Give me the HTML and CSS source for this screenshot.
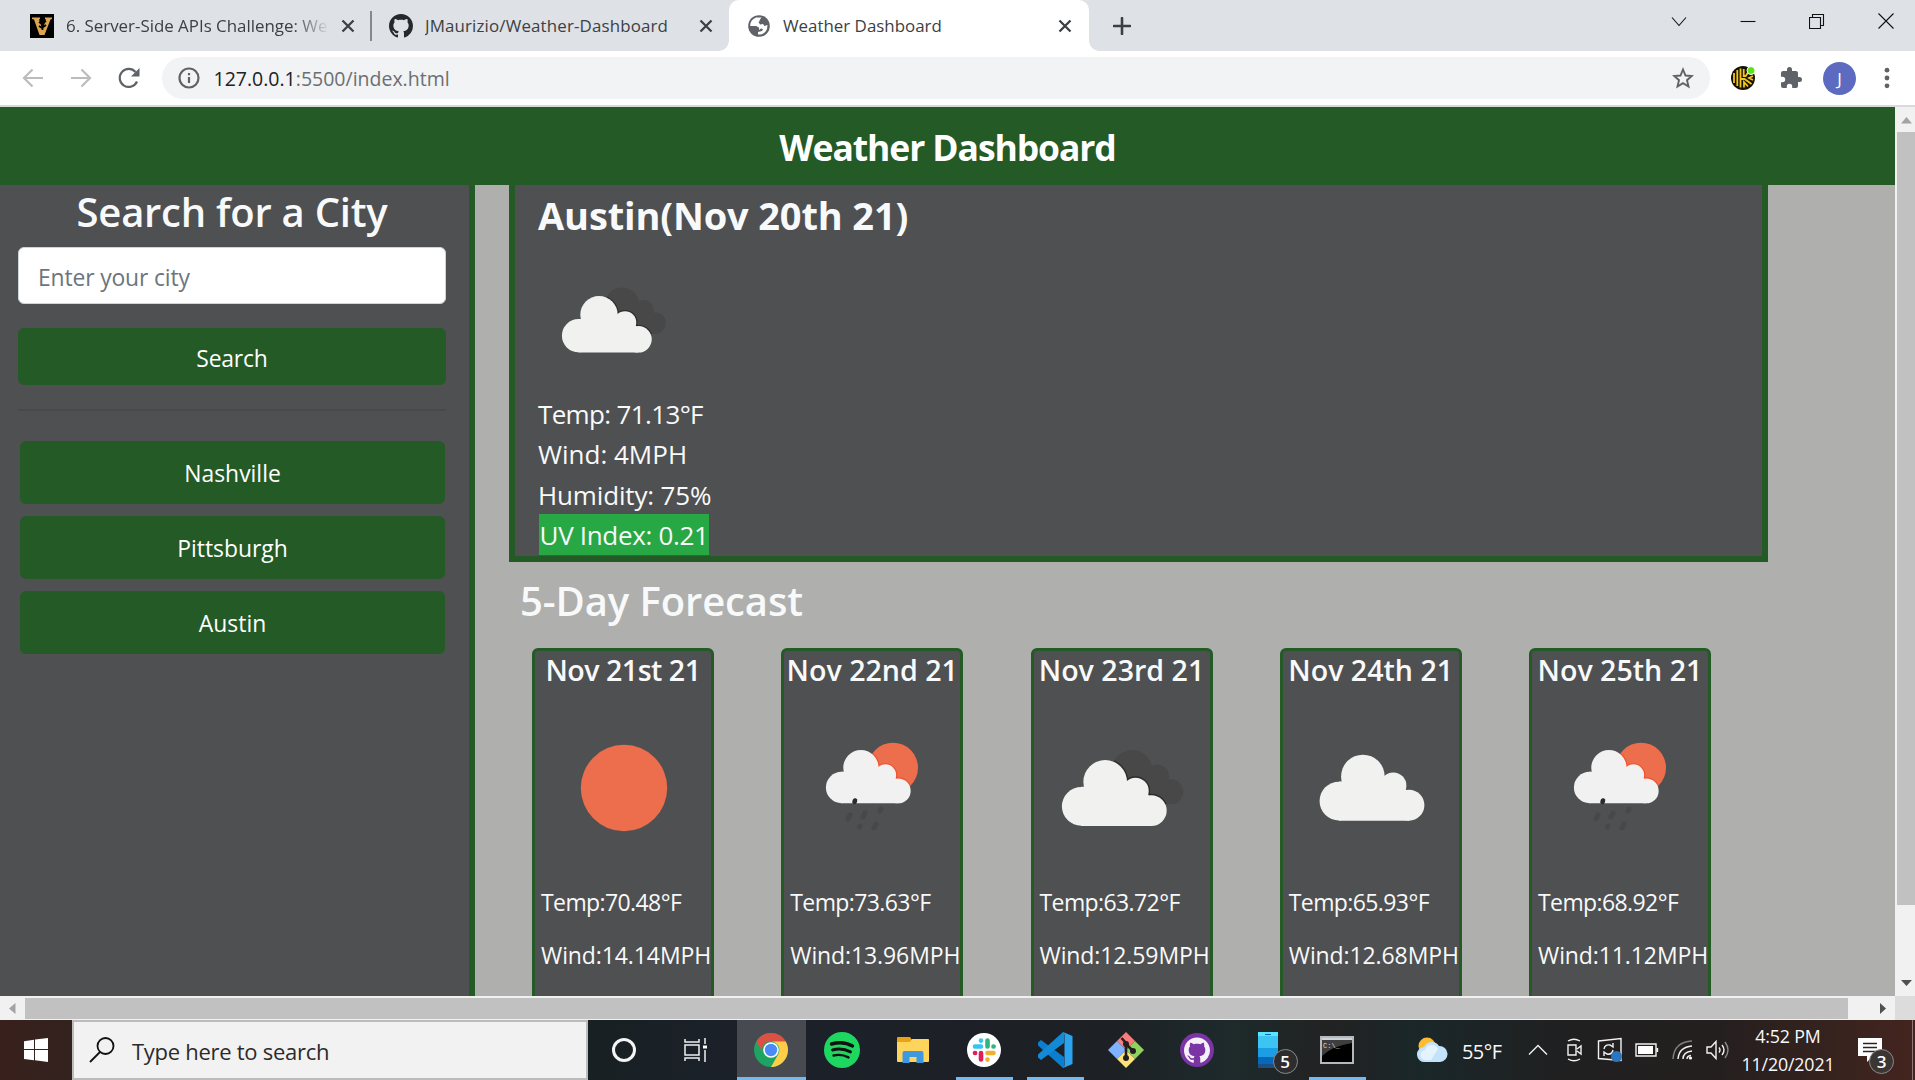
FILE: index.html
```html
<!DOCTYPE html>
<html lang="en">
<head>
<meta charset="utf-8">
<title>Weather Dashboard</title>
<link rel="stylesheet" href="styles.css">
</head>
<body>
<svg class="defs" width="0" height="0" aria-hidden="true">
  <defs>
    <g id="cloud">
      <circle cx="16.5" cy="39.7" r="16.6"/><circle cx="37" cy="18.7" r="18.7"/><circle cx="63" cy="26.5" r="11.3"/><circle cx="76.5" cy="43.3" r="13.2"/>
      <path d="M16.5 23H37V12L63 22L76.500 32V56.500H16.500Z"/>
    </g>
    <clipPath id="dark-clip"><circle cx="60" cy="9" r="17.500"/><circle cx="81.700" cy="14" r="10"/><circle cx="93.300" cy="27.300" r="10.700"/><path d="M44 9H78L94 20V38H60Z"/></clipPath>
    <g id="broken">
      <g clip-path="url(#dark-clip)">
        <path fill="#484849" d="M40-10H106V40H40Z"/>
        <use href="#cloud" fill="#2c2c2d" stroke="#2c2c2d" stroke-width="2.400"/>
      </g>
      <use href="#cloud" fill="#f1f1ef"/>
    </g>
    <clipPath id="sun-clip"><circle cx="109" cy="79.700" r="25"/></clipPath>
    <g id="rain">
      <circle cx="109" cy="79.700" r="25" fill="#ec6e4c"/>
      <g clip-path="url(#sun-clip)"><use href="#cloud" transform="translate(42 62) scale(.944)" fill="#f0502c" stroke="#f0502c" stroke-width="2.400"/></g>
      <use href="#cloud" transform="translate(42 62) scale(.944)" fill="#f1f1f1"/>
      <path d="M70.500 114l.5-1.500" stroke="#2c2c2d" stroke-width="4.600" stroke-linecap="round"/>
      <path d="M64 131l2-4M79 129l2-4M96 123l1-2M75.500 139l.5-1M90 140l2-4" stroke="#48484a" stroke-width="5" stroke-linecap="round"/>
    </g>
    <path id="octocat" d="M8 0C3.580 0 0 3.580 0 8c0 3.540 2.290 6.530 5.470 7.590.4.070.55-.17.55-.38 0-.19-.01-.82-.01-1.490-2.010.37-2.530-.49-2.690-.94-.09-.23-.48-.94-.82-1.130-.28-.15-.68-.52-.01-.53.63-.01 1.080.58 1.230.82.72 1.210 1.870.87 2.330.66.070-.52.28-.87.51-1.070-1.780-.2-3.640-.89-3.640-3.950 0-.87.31-1.590.82-2.150-.08-.2-.36-1.020.08-2.120 0 0 .67-.21 2.200.82.64-.18 1.320-.27 2-.27s1.360.09 2 .27c1.530-1.040 2.200-.82 2.200-.82.44 1.100.16 1.920.08 2.120.51.56.82 1.270.82 2.150 0 3.070-1.870 3.750-3.650 3.950.29.25.54.73.54 1.480 0 1.070-.01 1.930-.01 2.200 0 .21.15.46.55.38A8.010 8.010 0 0 0 16 8c0-4.420-3.580-8-8-8z"/>
  </defs>
</svg>

<div class="tabs">
  <div class="tab tab-first">
    <svg class="favicon" width="24" height="24" viewBox="0 0 24 24"><path d="M0 0h24v24H0z"/><path d="M2 3.500H10V5L9 5.500l3.500 10L16 5.500 15 5V3.500h7V5l-1.500.5-6 15.500h-5L4 5.500 2 5z" fill="#dba552"/><path d="M12.500 3v13M9 8l3 2 4-3M9 12l3 2 4-3" stroke="#000" stroke-width="1.800" fill="none"/></svg>
    <span class="tab-title faded">6. Server-Side APIs Challenge: We</span>
    <svg class="close" width="14" height="14" viewBox="0 0 14 14"><path d="M1.500 1.500l11 11M12.500 1.500l-11 11"/></svg>
  </div>
  <div class="tab tab-second">
    <svg class="favicon" width="24" height="24" viewBox="0 0 16 16"><use href="#octocat" fill="#24292f"/></svg>
    <span class="tab-title">JMaurizio/Weather-Dashboard</span>
    <svg class="close" width="14" height="14" viewBox="0 0 14 14"><path d="M1.500 1.500l11 11M12.500 1.500l-11 11"/></svg>
  </div>
  <div class="tab tab-active">
    <svg class="favicon" width="22" height="22" viewBox="0 0 22 22"><circle cx="11" cy="11" r="10.800" fill="#5f6368"/><path d="M8 2.500C4 4 2 7.500 2.200 11H8l3 1.500V15l2-1.500 2 .5-1 2-4 1v2.500c4 .3 7.500-1.500 9-5.500l.5-4-3 1-1.500-2-3 .5-1.500-2.500H8V7.500l3-.5 1-2.500 1.500-2z" fill="#fff"/></svg>
    <span class="tab-title">Weather Dashboard</span>
    <svg class="close" width="14" height="14" viewBox="0 0 14 14"><path d="M1.500 1.500l11 11M12.500 1.500l-11 11"/></svg>
  </div>
  <svg class="newtab" width="18" height="18" viewBox="0 0 18 18"><path d="M9 1v16M1 9h16" stroke="#3c4043" stroke-width="2.600" stroke-linecap="round"/></svg>
  <div class="winbtns">
    <svg width="16" height="16" viewBox="0 0 16 16"><path d="M1 4.500l7 8 7-8"/></svg>
    <svg width="16" height="16" viewBox="0 0 16 16"><path d="M.5 8.500h15"/></svg>
    <svg width="16" height="16" viewBox="0 0 16 16"><path d="M.5 4.500h11v11H.5zM3.500 4.500v-3h11v11h-3"/></svg>
    <svg width="16" height="16" viewBox="0 0 16 16"><path d="M.5.5l15 15M15.500.5l-15 15"/></svg>
  </div>
</div>

<div class="toolbar">
  <svg width="22" height="20" viewBox="0 0 22 20" class="nav nav-off"><path d="M21 10H2M10.500 1.500L2 10l8.500 8.500"/></svg>
  <svg width="22" height="20" viewBox="0 0 22 20" class="nav nav-off"><path d="M1 10h19M11.500 1.500L20 10l-8.500 8.500"/></svg>
  <svg width="22" height="22" viewBox="0 0 22 22" class="nav reload"><path d="M19 14.500A9 9 0 1 1 17.500 5"/><path d="M21.500 1v8.500H13z" fill="#5f6368" stroke="none"/></svg>
  <div class="omnibox">
    <svg width="22" height="22" viewBox="0 0 22 22" fill="none" stroke="#5f6368" stroke-width="2.200"><circle cx="11" cy="11" r="9.500"/><path d="M11 10v6M11 6v2.200"/></svg>
    <span class="url">127.0.0.1<span class="path">:5500/index.html</span></span>
    <svg class="star" width="22" height="22" viewBox="0 0 22 22"><path d="M11 2.500l2.500 6 6.300.5-4.800 4.200 1.500 6.300-5.500-3.400-5.500 3.400L7 13.200 2.200 9l6.300-.5z" fill="none" stroke="#5f6368" stroke-width="1.900"/></svg>
  </div>
  <svg class="ext" width="24" height="24" viewBox="0 0 24 24"><circle cx="12" cy="12" r="12" fill="#151208"/><path d="M3 7v10M6.300 4v16M9.500 2.500v19M12.700 3v7h2l2-3M9.500 13h4l7 5M13 21.500V16l4 4.500M22 14l-4-2 4-2" stroke="#f5c518" stroke-width="1.800" fill="none"/><circle cx="20" cy="4.500" r="4" fill="#5fe01c" stroke="#fff"/></svg>
  <svg class="puzzle" width="24" height="24" viewBox="0 0 24 24"><path fill="#5f6368" d="M20.500 11H19V7c0-1.100-.9-2-2-2h-4V3.500a2.500 2.500 0 0 0-5 0V5H4c-1.100 0-2 .9-2 2v3.800h1.500a2.700 2.700 0 0 1 0 5.400H2V20c0 1.100.9 2 2 2h3.800v-1.500a2.700 2.700 0 0 1 5.400 0V22H17c1.100 0 2-.9 2-2v-4h1.500a2.500 2.500 0 0 0 0-5z"/></svg>
  <div class="avatar">J</div>
  <svg width="6" height="22" viewBox="0 0 6 22" fill="#5f6368"><circle cx="3" cy="3.200" r="2.400"/><circle cx="3" cy="11" r="2.400"/><circle cx="3" cy="18.800" r="2.400"/></svg>
</div>

<div class="viewport">
  <div class="page">
    <header class="page-header"><h1>Weather Dashboard</h1></header>
    <div class="columns">
      <aside class="sidebar">
        <h2>Search for a City</h2>
        <div class="field">Enter your city</div>
        <button class="btn search">Search</button>
        <hr>
        <div class="history">
          <button class="btn">Nashville</button>
          <button class="btn">Pittsburgh</button>
          <button class="btn">Austin</button>
        </div>
      </aside>
      <main class="main">
        <section class="current">
          <h2>Austin(Nov 20th 21)</h2>
          <svg width="150" height="155" viewBox="0 0 150 155"><use href="#broken" transform="translate(24 57)"/></svg>
          <p class="temp">Temp: 71.13°F</p>
          <p>Wind: 4MPH</p>
          <p class="humidity">Humidity: 75%</p>
          <p><span class="uv">UV Index: 0.21</span></p>
        </section>
        <h2 class="forecast-title">5-Day Forecast</h2>
        <section class="forecast">
          <article class="day"><h3 class="st">Nov 21st 21</h3>
            <svg width="176" height="196" viewBox="0 0 176 196"><circle cx="89" cy="100" r="43.200" fill="#ec6e4c"/></svg>
            <p class="temp">Temp:70.48°F</p><p>Wind:14.14MPH</p></article>
          <article class="day"><h3>Nov 22nd 21</h3>
            <svg width="176" height="196" viewBox="0 0 176 196"><use href="#rain"/></svg>
            <p class="temp">Temp:73.63°F</p><p>Wind:13.96MPH</p></article>
          <article class="day"><h3>Nov 23rd 21</h3>
            <svg width="176" height="196" viewBox="0 0 176 196"><use href="#broken" transform="translate(28 72) scale(1.167)"/></svg>
            <p class="temp">Temp:63.72°F</p><p>Wind:12.59MPH</p></article>
          <article class="day"><h3>Nov 24th 21</h3>
            <svg width="176" height="196" viewBox="0 0 176 196"><use href="#cloud" transform="translate(36.700 66.700) scale(1.167)" fill="#f1f1ef"/></svg>
            <p class="temp">Temp:65.93°F</p><p>Wind:12.68MPH</p></article>
          <article class="day"><h3>Nov 25th 21</h3>
            <svg width="176" height="196" viewBox="0 0 176 196"><use href="#rain"/></svg>
            <p class="temp">Temp:68.92°F</p><p>Wind:11.12MPH</p></article>
        </section>
      </main>
    </div>
  </div>
  <div class="vscroll">
    <svg width="11" height="7" viewBox="0 0 11 7"><path d="M0 6.500L5.500 0 11 6.500z" fill="#a3a3a3"/></svg>
    <div class="vthumb"></div>
    <svg class="down" width="11" height="6" viewBox="0 0 11 6"><path d="M0 0h11L5.500 6z" fill="#505050"/></svg>
  </div>
</div>
<div class="hscroll">
  <svg width="7" height="11" viewBox="0 0 7 11"><path d="M6.500 0v11L0 5.500z" fill="#a3a3a3"/></svg>
  <div class="hthumb"></div>
  <svg class="right" width="6" height="11" viewBox="0 0 6 11"><path d="M0 0v11l6-5.500z" fill="#505050"/></svg>
  <div class="corner"></div>
</div>

<div class="taskbar">
  <div class="start"><svg width="24" height="24" viewBox="0 0 24 24" fill="#fff"><path d="M0 3.200L10 1.800V11H0zM11 1.600L24 0v11H11zM0 12h10v10.200L0 21zM11 12h13v12l-13-1.700z"/></svg></div>
  <div class="search-box">
    <svg width="26" height="26" viewBox="0 0 26 26" fill="none" stroke="#111" stroke-width="1.800"><circle cx="16.500" cy="9" r="8"/><path d="M11 15L1 25"/></svg>
    <span>Type here to search</span>
  </div>
  <div class="cell cortana"><svg width="26" height="26" viewBox="0 0 26 26"><circle cx="13" cy="13" r="10.500" fill="none" stroke="#f4f4f4" stroke-width="3"/></svg></div>
  <div class="cell taskview"><svg width="24" height="24" viewBox="0 0 24 24" fill="none" stroke="#f0f0f0" stroke-width="1.500"><path d="M1 1v3h14V1M1 7h14v10H1zM1 23v-3h14v3M21 0v6M21 12v12"/><path d="M19 7.500h4v3h-4z" fill="#fff" stroke="none"/></svg></div>
  <div class="cell app active"><svg width="34" height="34" viewBox="0 0 34 34"><circle cx="17" cy="17" r="17" fill="#1da462"/><path d="M2.300 8.500A17 17 0 0 1 31.700 8.500H17a8 8 0 0 0-7.500 12.500z" fill="#dd5144"/><path d="M31.700 8.500A17 17 0 0 1 17 34L24.400 21A8.500 8.500 0 0 0 17 8.500z" fill="#ffcd46"/><circle cx="17" cy="17" r="7.800" fill="#fff"/><circle cx="17" cy="17" r="6.200" fill="#4c8bf5"/></svg></div>
  <div class="cell app"><svg width="36" height="36" viewBox="0 0 36 36"><circle cx="18" cy="18" r="18" fill="#1ed760"/><path d="M7.500 12c7-2 15-1.500 21 2" stroke="#111" stroke-width="3.400" fill="none" stroke-linecap="round"/><path d="M8.500 18c6-1.600 12.500-1 18 1.900" stroke="#111" stroke-width="2.900" fill="none" stroke-linecap="round"/><path d="M9.500 23.500c5-1.200 10-.8 15 1.900" stroke="#111" stroke-width="2.400" fill="none" stroke-linecap="round"/></svg></div>
  <div class="cell app"><svg width="32" height="28" viewBox="0 0 32 28"><path d="M0 2q0-1 1-1h12l2 3v6H0z" fill="#e8a317"/><path d="M0 6h13l2-3h16q1 0 1 1v21q0 1-1 1H1q-1 0-1-1z" fill="#ffd45c"/><path d="M5.500 27V17q0-2 2-2h17q2 0 2 2v10h-7v-6h-7v6z" fill="#3e98e0"/></svg></div>
  <div class="cell app running"><svg width="34" height="34" viewBox="0 0 34 34"><circle cx="17" cy="17" r="17" fill="#fff"/><g stroke-width="4.600" stroke-linecap="round"><path d="M8 13.500h6M14 7.500v.1" stroke="#36c5f0"/><path d="M20.500 7.500v6M26.500 13.500h.1" stroke="#2eb67d"/><path d="M26.500 20h-6M20.500 26.500v.1" stroke="#ecb22e"/><path d="M14 26.500V20M8 20h.1" stroke="#e01e5a"/></g></svg></div>
  <div class="cell app running"><svg width="36" height="36" viewBox="0 0 36 36"><path d="M1 10.500L4 8l23 17v10.500L26 36 1 13.500z" fill="#0a7fcf"/><path d="M1 25.500L4 28l23-17V.5L26 0 1 22.500z" fill="#1489d6"/><path d="M26 0l9.500 4v28L26 36q1.500-1 1.500-3V3q0-2-1.500-3z" fill="#2ba3ef"/></svg></div>
  <div class="cell app"><svg width="36" height="36" viewBox="0 0 36 36"><path d="M18 0l9 9-9 9-9-9z" fill="#f97c7c"/><path d="M27 9l9 9-9 9-9-9z" fill="#8fd35f"/><path d="M9 9l9 9-9 9-9-9z" fill="#80b3ff"/><path d="M18 18l9 9-9 9-9-9z" fill="#ffe27a"/><path d="M13.500 6l4.500 5v15M18 12l7 7" stroke="#231f20" stroke-width="2.600" fill="none"/><circle cx="18" cy="12" r="3" fill="#231f20"/><circle cx="18" cy="26" r="3" fill="#231f20"/><circle cx="25" cy="19" r="3" fill="#231f20"/></svg></div>
  <div class="cell app"><svg width="34" height="34" viewBox="0 0 34 34"><circle cx="17" cy="17" r="17" fill="#7b34a5"/><use href="#octocat" transform="translate(4 4.500) scale(1.625)" fill="#f5f0f8"/></svg></div>
  <div class="cell app phone"><svg width="20" height="36" viewBox="0 0 20 36"><path d="M0 0h20v36H0z" fill="#3cc5f2"/><path d="M0 0h20v4H0z" fill="#5ae5ff"/><path d="M0 16h20v20H0z" fill="#1d9de3"/><path d="M0 25h20v11H0z" fill="#0868b8"/><path d="M0 32h20v4H0z" fill="#1b4f87"/><path d="M7 2.500h6" stroke="#0868b8"/></svg><span class="badge">5</span></div>
  <div class="cell app running cmd"><svg width="34" height="28" viewBox="0 0 34 28"><path d="M1 1h32v26H1z" fill="#000" stroke="#b5b8bc" stroke-width="2"/><path d="M2 4V2h30v2z" fill="#ccd3da"/><path d="M2 4h30v3Q12 10 2 20z" fill="#3e3e3e"/><text x="3" y="12" font-size="7" fill="#ddd" class="mono">C:\_</text></svg></div>
  <div class="tray">
    <div class="weather"><svg width="31" height="26" viewBox="0 0 31 26"><circle cx="10" cy="9" r="8.500" fill="#fdbb2d"/><path d="M8 25a7.500 7.500 0 0 1-1-15 8.500 8.500 0 0 1 15-1 8 8 0 0 1 1 16z" fill="#c3e3fa"/><path d="M9 23a5 5 0 0 1-1-10 7 7 0 0 1 13-1L14 23z" fill="#e4f3fd"/></svg><span>55°F</span></div>
    <div class="ti w42"><svg width="20" height="12" viewBox="0 0 20 12"><path d="M1 10.500L10 1.500l9 9"/></svg></div>
    <div class="ti w32"><svg width="18" height="24" viewBox="0 0 18 24"><path d="M2 3q6-3.500 12 0M2 21q6 3.500 12 0M2 7h8v10H2zM11 11l4-3v8l-4-3"/></svg></div>
    <div class="ti w38"><svg width="26" height="26" viewBox="0 0 26 26"><path d="M1.500 4L24 1.500v22L1.500 21.500z"/><path d="M7 12q1-5 6-4l3 2V6M16 13q-1 5-6 4l-3-2v4"/><circle cx="19.500" cy="19.500" r="5.500" fill="#2b76c0" stroke="none"/></svg></div>
    <div class="ti w36"><svg width="24" height="14" viewBox="0 0 24 14"><path d="M1 1h20v12H1zM22.500 5v4"/><path d="M3 3h15v8H3z" fill="#fff" stroke="none"/></svg></div>
    <div class="ti w36"><svg width="22" height="22" viewBox="0 0 22 22"><path d="M1 20Q2 3 20 2" opacity=".45"/><path d="M6 20Q7 8 20 7M11 20Q11 13 20 12M15 20q0-3 4-3.500"/><circle cx="18.500" cy="19" r="1.600" fill="#fff" stroke="none"/></svg></div>
    <div class="ti w34"><svg width="24" height="20" viewBox="0 0 24 20"><path d="M1 7h4l5-5.500v17L5 13H1zM13 7.500q2 2.500 0 5M16 5q4 5 0 10"/><path d="M19 2q6 8 0 16" opacity=".5"/></svg></div>
    <div class="clock"><span>4:52 PM</span><span>11/20/2021</span></div>
    <div class="action"><svg width="24" height="24" viewBox="0 0 24 24"><path d="M0 0h24v18H15l-6 6v-6H0z" fill="#fff"/><path d="M5 5.500h14M5 9.500h14M5 13.500h14" stroke="#2b2422" stroke-width="1.300"/></svg><span class="badge">3</span></div>
    <div class="peek"></div>
  </div>
</div>
</body>
</html>
```
FILE: styles.css
```css
* { box-sizing: border-box; }
body { margin: 0; width: 1915px; height: 1080px; overflow: hidden; display: flex; flex-direction: column; font-family: "Open Sans", "Noto Sans", sans-serif; color: #f8f9fa; }
h1, h2, h3, p { margin: 0; white-space: nowrap; }
svg { display: block; flex: none; }
.defs { position: absolute; }

/* browser tabs */
.tabs { flex: none; height: 51px; background: #dee1e6; display: flex; align-items: flex-start; color: #3c4043; }
.tab { height: 51px; display: flex; align-items: center; }
.tab-first { width: 372px; padding: 0 17px 0 30px; background: linear-gradient(#85888d, #85888d) right 11px / 2px 30px no-repeat; }
.tab-second { width: 357px; padding: 0 16px 0 17px; }
.tab-second .tab-title { letter-spacing: 0.15px; }
.tab-active { width: 360px; padding: 0 17px 0 19px; background: #fff; border-radius: 10px 10px 0 0; position: relative; }
.tab-active::before, .tab-active::after { content: ""; position: absolute; bottom: 0; width: 10px; height: 10px; }
.tab-active::before { left: -10px; background: radial-gradient(circle at 0 0, transparent 9.5px, #fff 10px); }
.tab-active::after { right: -10px; background: radial-gradient(circle at 100% 0, transparent 9.5px, #fff 10px); }
.tab-title { flex: 1; margin-left: 12px; font-size: 16.9px; line-height: 24px; white-space: nowrap; overflow: hidden; }
.tab-active .tab-title { margin-left: 13px; }
.faded { margin-right: 11px; -webkit-mask-image: linear-gradient(90deg, #000 86%, transparent 100%); mask-image: linear-gradient(90deg, #000 86%, transparent 100%); }
.close { stroke: #3c4043; stroke-width: 2.3; fill: none; }
.newtab { margin: 16.5px 0 0 24px; }
.winbtns { margin-left: auto; display: flex; gap: 53px; padding: 13px 21px 0 0; }
.winbtns svg { fill: none; stroke: #111; stroke-width: 1.1; }

/* address bar */
.toolbar { flex: none; height: 56px; background: #fff; border-bottom: 2px solid #d9dadc; display: flex; align-items: center; padding: 0 25px 0 22px; }
.nav { fill: none; stroke: #5f6368; stroke-width: 2.2; margin-right: 26px; }
.nav-off { stroke: #babcbe; }
.reload { margin-right: 22px; }
.omnibox { width: 1548px; height: 42px; border-radius: 21px; background: #f1f3f4; display: flex; align-items: center; padding: 0 16px 0 16px; }
.url { margin-left: 13.5px; font-size: 19.5px; color: #202124; white-space: nowrap; }
.path { color: #6b6f73; }
.star { margin-left: auto; }
.ext { margin-left: 21px; }
.puzzle { margin: 0 20px 0 24px; }
.avatar { width: 33px; height: 33px; border-radius: 50%; background: #5c6bc0; color: #fff; font-size: 17px; line-height: 33px; text-align: center; margin-right: 28px; }

/* viewport */
.viewport { flex: none; height: 889px; display: flex; overflow: hidden; }
.page { width: 1895px; height: 889px; overflow: hidden; display: flex; flex-direction: column; background: #afafad; }
.page-header { flex: none; height: 78px; background: #245a25; text-align: center; padding-top: 12px; }
.page-header h1 { font-size: 35.5px; line-height: 56px; letter-spacing: -1.1px; color: #fff; }
.columns { flex: 1; display: flex; }
.sidebar { width: 475px; background: #4f5051; border-right: 6px solid #245a25; padding: 1px 23px 0 18px; }
.sidebar h2 { font-size: 40px; line-height: 52px; font-weight: 600; text-align: center; letter-spacing: -0.25px; }
.field { margin-top: 9px; height: 57px; border: 1px solid #ced4da; border-radius: 6px; background: #fff; color: #6c757d; font-size: 22.9px; line-height: 60px; padding-left: 19px; letter-spacing: -0.15px; }
.btn { display: block; width: 100%; height: 63px; border: 0; border-radius: 6px; background: #245a25; color: #fff; font: 22.9px/62px "Open Sans", "Noto Sans", sans-serif; text-align: center; padding: 2px 0 0; }
.search { margin-top: 24px; height: 57px; line-height: 55px; padding-top: 3px; letter-spacing: -0.2px; }
.sidebar hr { margin: 24px 0 30px; height: 2px; border: 0; background: #49494b; }
.history { display: flex; flex-direction: column; gap: 12px; padding: 0 1px 0 2px; }
.main { flex: 1; padding-left: 34px; }
.current { width: 1259px; height: 377px; background: #4f5051; border: 6px solid #245a25; border-top: 0; padding: 6px 0 0 23px; }
.current h2 { font-size: 38px; line-height: 48px; font-weight: 700; letter-spacing: -0.15px; }
.current p { font-size: 26px; line-height: 41px; height: 40.4px; }
.current .temp { letter-spacing: -0.65px; }
.current .humidity { letter-spacing: -0.15px; }
.uv { display: inline-block; height: 41px; margin: -1px 0 0 1px; background: #28a745; padding: 0 0.5px; line-height: 43px; letter-spacing: -0.32px; vertical-align: top; }
.forecast-title { padding-left: 11px; margin: 14px 0 22px; font-size: 40px; line-height: 50px; font-weight: 600; letter-spacing: -0.1px; }
.forecast { display: flex; gap: 67.25px; padding-left: 23px; }
.day { flex: none; width: 182px; height: 420px; background: #4f5051; border: 3px solid #245a25; border-radius: 6px; }
.day h3 { font-size: 28.6px; line-height: 37px; font-weight: 600; display: flex; justify-content: center; }
.day .st { letter-spacing: -0.5px; }
.day p { padding-left: 6px; font-size: 23px; line-height: 37px; height: 36px; margin-bottom: 17px; letter-spacing: -0.1px; }
.day .temp { letter-spacing: -0.6px; }

/* scrollbars */
.vscroll { width: 20px; background: #f1f1f1; padding-left: 2px; display: flex; flex-direction: column; align-items: center; padding-top: 10px; }
.vthumb { width: 18px; height: 773px; margin-top: 8px; background: #c1c1c1; }
.down { margin-top: 75px; }
.hscroll { flex: none; height: 24px; background: #f1f1f1; display: flex; align-items: center; padding-left: 9px; }
.hthumb { margin-left: 9px; width: 1823px; height: 21px; background: #c1c1c1; }
.right { margin-left: 32px; }
.corner { margin-left: auto; width: 20px; height: 24px; background: #dcdcdc; }

/* taskbar */
.taskbar { flex: none; height: 60px; display: flex; background: linear-gradient(90deg, #38201c 0, #33221f 72px, #182023 588px, #1c212a 760px, #1d2024 1100px, #1e2a2b 1230px, #222223 1330px, #1a2729 1420px, #202021 1560px, #241f1f 1720px, #38231e 1840px, #44241f 1915px); }
.start { width: 72px; display: flex; align-items: center; justify-content: center; }
.search-box { width: 516px; background: #f2f2f2; border: 2px solid #bcbcbc; display: flex; align-items: center; padding-left: 15px; color: #2b2b2b; font-size: 22px; letter-spacing: -0.28px; }
.search-box span { margin-left: 17px; padding-top: 2px; white-space: nowrap; }
.cell { width: 71px; display: flex; align-items: center; justify-content: center; position: relative; }
.cortana { width: 72px; }
.taskview { width: 75.5px; padding-right: 3px; }
.active { background: linear-gradient(#474b51, #474b51) center / 69px 60px no-repeat; }
.active::after, .running::after { content: ""; position: absolute; left: 7px; bottom: 0; width: 57px; height: 3px; background: #76b9ed; }
.active::after { left: 1px; width: 69px; }
.cmd { width: 66px; }
.cmd::after { left: 5px; }
.badge { position: absolute; width: 25px; height: 25px; border-radius: 50%; border: 1px solid #8a8a8a; background: #2d2d2f; color: #fff; font-size: 17px; font-weight: 600; line-height: 23px; text-align: center; }
.phone .badge { left: 40px; top: 29px; }
.mono { font-family: "Liberation Mono", monospace; }
.tray { margin-left: auto; display: flex; width: 511px; font-size: 17.8px; }
.weather { width: 113px; padding-left: 13px; display: flex; align-items: center; font-size: 19.9px; letter-spacing: -0.5px; }
.weather span { margin-left: 14px; padding-top: 3px; }
.ti { display: flex; align-items: center; justify-content: center; }
.ti svg { fill: none; stroke: #f2f2f2; stroke-width: 1.4; }
.w42 { width: 42px; } .w32 { width: 32px; } .w38 { width: 38px; } .w36 { width: 36px; } .w34 { width: 34px; }
.clock { width: 106px; display: flex; flex-direction: column; align-items: center; line-height: 28px; padding-top: 2px; letter-spacing: -0.15px; }
.action { width: 58px; display: flex; align-items: center; justify-content: center; position: relative; }
.action .badge { left: 28px; top: 29px; background: #3b3534; }
.peek { width: 14px; border-right: 1px solid #8d7a78; margin-right: 1px; }
```
